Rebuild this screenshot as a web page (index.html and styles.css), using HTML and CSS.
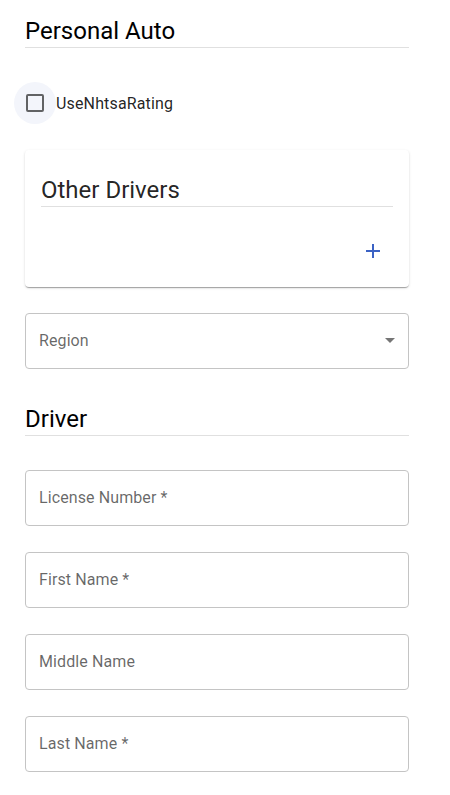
FILE: index.html
```html
<!DOCTYPE html>
<html lang="en">
<head>
    <meta charset="UTF-8">
    <title>Personal Auto</title>
    <link rel="stylesheet" href="styles.css">
</head>
<body>
    <div class="form">
        <h2 class="section-title">Personal Auto</h2>

        <label class="check-row">
            <span class="check-button"><span class="check-box"></span></span>
            <span class="check-label">UseNhtsaRating</span>
        </label>

        <div class="card">
            <h3 class="card-title">Other Drivers</h3>
            <div class="card-actions">
                <button class="add-button" title="Add">
                    <svg width="24" height="24" viewBox="0 0 24 24"><path d="M19 13h-6v6h-2v-6H5v-2h6V5h2v6h6v2z" fill="currentColor"/></svg>
                </button>
            </div>
        </div>

        <div class="field select-field">
            <span class="field-label">Region</span>
            <svg class="select-arrow" width="24" height="24" viewBox="0 0 24 24"><path d="M7 10l5 5 5-5z" fill="currentColor"/></svg>
        </div>

        <h2 class="section-title driver-title">Driver</h2>

        <div class="field"><span class="field-label">License Number *</span></div>
        <div class="field"><span class="field-label">First Name *</span></div>
        <div class="field"><span class="field-label">Middle Name</span></div>
        <div class="field"><span class="field-label">Last Name *</span></div>
    </div>
</body>
</html>
```

FILE: styles.css
```css
body {
    font-family: Roboto, 'Liberation Sans', sans-serif;
    background-color: #fff;
    margin: 0;
    padding: 0;
    color: rgba(0, 0, 0, 0.87);
}
.form {
    width: 384px;
    padding: 17px 0 0 25px;
}
.section-title {
    font-size: 24px;
    font-weight: 400;
    line-height: 28px;
    color: #000;
    margin: 0;
    padding-bottom: 2px;
    border-bottom: 1px solid #e0e0e0;
}
.check-row {
    display: flex;
    align-items: center;
    margin: 34px 0 0 -11px;
    cursor: pointer;
}
.check-button {
    width: 42px;
    height: 42px;
    border-radius: 50%;
    background-color: #f3f5fb;
    display: flex;
    align-items: center;
    justify-content: center;
}
.check-box {
    width: 14px;
    height: 14px;
    border: 2px solid rgba(0, 0, 0, 0.6);
    border-radius: 2px;
}
.check-label {
    font-size: 16px;
    letter-spacing: 0.15px;
    color: rgba(0, 0, 0, 0.87);
}
.card {
    margin-top: 26px;
    background-color: #fff;
    border-radius: 4px;
    box-shadow: 0 2px 1px -1px rgba(0, 0, 0, 0.2), 0 1px 1px 0 rgba(0, 0, 0, 0.14), 0 1px 3px 0 rgba(0, 0, 0, 0.12);
    padding: 26px 16px 12px 16px;
}
.card-title {
    font-size: 24px;
    font-weight: 400;
    line-height: 28px;
    margin: 0;
    padding-bottom: 2px;
    border-bottom: 1px solid #e0e0e0;
    color: rgba(0, 0, 0, 0.87);
}
.card-actions {
    display: flex;
    justify-content: flex-end;
    margin-top: 20px;
    margin-right: -4px;
}
.add-button {
    width: 48px;
    height: 48px;
    border: none;
    background: none;
    border-radius: 50%;
    display: flex;
    align-items: center;
    justify-content: center;
    color: #3b62c4;
    padding: 0;
    cursor: pointer;
}
.field {
    box-sizing: border-box;
    height: 56px;
    border: 1px solid #c4c4c4;
    border-radius: 4px;
    margin-top: 26px;
    display: flex;
    align-items: center;
    padding: 0 14px 2px 13px;
}
.field-label {
    font-size: 16px;
    letter-spacing: 0.1px;
    color: rgba(0, 0, 0, 0.6);
    flex: 1;
}
.select-field {
    margin-top: 26px;
    padding-right: 6px;
}
.select-arrow {
    color: rgba(0, 0, 0, 0.54);
}
.driver-title {
    margin-top: 36px;
}
.driver-title + .field {
    margin-top: 34px;
}
```
